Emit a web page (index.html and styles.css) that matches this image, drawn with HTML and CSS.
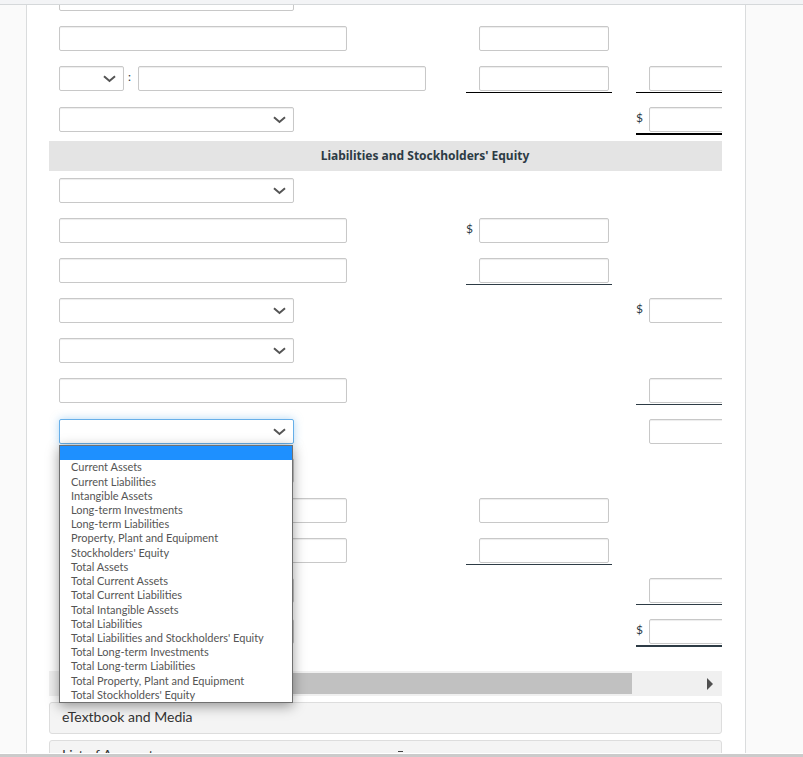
FILE: index.html
```
<!DOCTYPE html>
<html lang="en">
<head>
  <title>Balance Sheet</title>
  <meta charset="utf-8"/>
  <link rel="stylesheet" href="styles.css">
</head>
<body>
  <div class="topbar"></div>

  <main class="viewport">
    <div class="panel">
      <div class="sheet-scroll">
        <table class="sheet">
          <colgroup>
            <col class="col-account">
            <col class="col-amount">
            <col class="col-total">
          </colgroup>
          <tbody>
            <tr>
              <td><select class="field account" aria-label="Section"></select></td>
              <td></td>
              <td></td>
            </tr>
            <tr>
              <td><input type="text" class="field name" aria-label="Account"></td>
              <td><div class="amount"><input type="text" class="field" aria-label="Amount"></div></td>
              <td></td>
            </tr>
            <tr>
              <td>
                <div class="adjust">
                  <select class="field short" aria-label="Add or less"></select>
                  <span class="colon">:</span>
                  <input type="text" class="field name" aria-label="Account">
                </div>
              </td>
              <td><div class="amount line black"><input type="text" class="field" aria-label="Amount"></div></td>
              <td><div class="amount line black"><input type="text" class="field" aria-label="Total"></div></td>
            </tr>
            <tr class="grand">
              <td><select class="field account" aria-label="Total"></select></td>
              <td></td>
              <td><div class="amount double black"><span class="sign">$</span><input type="text" class="field" aria-label="Total assets"></div></td>
            </tr>
            <tr>
              <th colspan="3">Liabilities and Stockholders' Equity</th>
            </tr>
            <tr>
              <td><select class="field account" aria-label="Section"></select></td>
              <td></td>
              <td></td>
            </tr>
            <tr>
              <td><input type="text" class="field name" aria-label="Account"></td>
              <td><div class="amount"><span class="sign">$</span><input type="text" class="field" aria-label="Amount"></div></td>
              <td></td>
            </tr>
            <tr>
              <td><input type="text" class="field name" aria-label="Account"></td>
              <td><div class="amount line"><input type="text" class="field" aria-label="Amount"></div></td>
              <td></td>
            </tr>
            <tr>
              <td><select class="field account" aria-label="Subtotal"></select></td>
              <td></td>
              <td><div class="amount"><span class="sign">$</span><input type="text" class="field" aria-label="Total"></div></td>
            </tr>
            <tr>
              <td><select class="field account" aria-label="Section"></select></td>
              <td></td>
              <td></td>
            </tr>
            <tr>
              <td><input type="text" class="field name" aria-label="Account"></td>
              <td></td>
              <td><div class="amount line"><input type="text" class="field" aria-label="Total"></div></td>
            </tr>
            <tr class="active">
              <td>
                <select class="field account open" aria-label="Subtotal"></select>
                <ul class="options" role="listbox" aria-label="Subtotal options">
                  <li class="selected" role="option" aria-selected="true"></li>
                  <li role="option">Current Assets</li>
                  <li role="option">Current Liabilities</li>
                  <li role="option">Intangible Assets</li>
                  <li role="option">Long-term Investments</li>
                  <li role="option">Long-term Liabilities</li>
                  <li role="option">Property, Plant and Equipment</li>
                  <li role="option">Stockholders' Equity</li>
                  <li role="option">Total Assets</li>
                  <li role="option">Total Current Assets</li>
                  <li role="option">Total Current Liabilities</li>
                  <li role="option">Total Intangible Assets</li>
                  <li role="option">Total Liabilities</li>
                  <li role="option">Total Liabilities and Stockholders' Equity</li>
                  <li role="option">Total Long-term Investments</li>
                  <li role="option">Total Long-term Liabilities</li>
                  <li role="option">Total Property, Plant and Equipment</li>
                  <li role="option">Total Stockholders' Equity</li>
                </ul>
              </td>
              <td></td>
              <td><div class="amount"><input type="text" class="field" aria-label="Total"></div></td>
            </tr>
            <tr>
              <td><select class="field account" aria-label="Section"></select></td>
              <td></td>
              <td></td>
            </tr>
            <tr>
              <td><input type="text" class="field name" aria-label="Account"></td>
              <td><div class="amount"><input type="text" class="field" aria-label="Amount"></div></td>
              <td></td>
            </tr>
            <tr>
              <td><input type="text" class="field name" aria-label="Account"></td>
              <td><div class="amount line"><input type="text" class="field" aria-label="Amount"></div></td>
              <td></td>
            </tr>
            <tr>
              <td><select class="field account" aria-label="Subtotal"></select></td>
              <td></td>
              <td><div class="amount line"><input type="text" class="field" aria-label="Total"></div></td>
            </tr>
            <tr class="grand">
              <td><select class="field account" aria-label="Total"></select></td>
              <td></td>
              <td><div class="amount double"><span class="sign">$</span><input type="text" class="field" aria-label="Total liabilities and equity"></div></td>
            </tr>
          </tbody>
        </table>
      </div>

      <div class="scrollbar">
        <button type="button" class="arrow" aria-label="Scroll left">
          <svg width="6" height="12" viewBox="0 0 6 12"><path d="M6 0v12L0 6z"/></svg>
        </button>
        <div class="track"><div class="thumb"></div></div>
        <button type="button" class="arrow" aria-label="Scroll right">
          <svg width="6" height="12" viewBox="0 0 6 12"><path d="M0 0v12l6-6z"/></svg>
        </button>
      </div>

      <button type="button" class="resource">eTextbook and Media</button>
      <button type="button" class="resource">
        List of Accounts
        <svg width="5" height="8" viewBox="0 0 5 8"><path d="M0 0h5v1H0z"/></svg>
      </button>
    </div>
  </main>

  <div class="bottombar"></div>
</body>
</html>
```
FILE: styles.css
```
* {
  box-sizing: border-box;
}

body {
  display: flex;
  flex-direction: column;
  height: 100vh;
  margin: 0;
  overflow: hidden;
  background: #fafafa;
  color: #2d3b45;
  font-family: Lato, sans-serif;
  font-size: 12px;
}

.topbar {
  flex: none;
  height: 5px;
  background: #f3f4f6;
  border-bottom: 1px solid #d5d8da;
}

.bottombar {
  flex: none;
  height: 4px;
  background: #cbcbcb;
  border-top: 1px solid #fff;
}

.viewport {
  flex: 1;
  min-height: 0;
  overflow: hidden;
}

.panel {
  position: relative;
  margin: 0 57px 0 26px;
  padding: 0 23px 20px 22px;
  background: #fff;
  border: solid #dadcdd;
  border-width: 0 1px;
}

/* answer table */
.sheet-scroll {
  overflow: hidden;
}

.sheet {
  width: 752px;
  /* the page is scrolled part way into the first row */
  margin-top: -26px;
  table-layout: fixed;
  border-collapse: collapse;
}

.col-account {
  width: 417px;
}

.col-amount {
  width: 170px;
}

.sheet td {
  height: 40px;
  padding: 7px 0 6px;
  vertical-align: top;
}

.sheet td:first-child {
  padding-left: 10px;
}

.sheet .grand td {
  height: 42px;
  padding-top: 8px;
}

.sheet .active td {
  padding-top: 8px;
  padding-bottom: 5px;
}

.sheet th {
  height: 30px;
  padding: 0 0 2px;
  background: #e4e4e4;
  font-family: "Noto Sans", sans-serif;
  font-size: 12px;
  font-weight: 700;
  text-align: center;
}

.field {
  display: block;
  width: 130px;
  height: 25px;
  margin: 0;
  padding: 2px 6px;
  background-color: #fff;
  border: 1px solid #c8c8c8;
  border-radius: 2px;
  box-shadow: inset 0 1px 1px rgba(0, 0, 0, 0.075);
  font: inherit;
}

.field.name {
  width: 288px;
}

select.field {
  width: 235px;
  appearance: none;
  background-image: url("data:image/svg+xml,%3Csvg xmlns='http://www.w3.org/2000/svg' width='13' height='8' viewBox='0 0 13 8'%3E%3Cpath d='M1 1.2l5.5 4.8L12 1.2' fill='none' stroke='%23555' stroke-width='2'/%3E%3C/svg%3E");
  background-repeat: no-repeat;
  background-position: right 7px center;
}

select.short {
  width: 65px;
}

select.open {
  border-color: #66afe9;
  box-shadow: 0 0 8px rgba(102, 175, 233, 0.5);
}

.adjust {
  display: flex;
}

.colon {
  width: 14px;
  padding-left: 4px;
  line-height: 22px;
}

.amount {
  display: flex;
  justify-content: flex-end;
  width: 146px;
  padding: 0 3px 1px 0;
  border-bottom: 1px solid transparent;
}

.amount.line {
  border-bottom-color: #2d3b45;
}

.amount.double {
  border-bottom: 2px solid #2d3b45;
}

.amount.black {
  border-bottom-color: #000;
}

.sign {
  width: 13px;
  line-height: 22px;
}

/* open list, lies over the rows below it */
.options {
  position: absolute;
  z-index: 1;
  display: grid;
  grid-auto-rows: 1fr;
  align-items: center;
  width: 234px;
  height: 258px;
  margin: 1px 0 0;
  padding: 0;
  background: #fff;
  border: 1px solid #707070;
  box-shadow: 0 3px 12px rgba(0, 0, 0, 0.4);
  color: #555;
  font-size: 11px;
  line-height: 14px;
  list-style: none;
}

.options li {
  padding-left: 11px;
}

.options .selected {
  align-self: stretch;
  background: #1e90ff;
}

/* horizontal scrollbar */
.scrollbar {
  display: flex;
  align-items: center;
  height: 25px;
  margin-top: 18px;
  background: #f0f0f0;
}

.arrow {
  display: flex;
  align-items: center;
  justify-content: center;
  width: 25px;
  height: 25px;
  padding: 0;
  background: none;
  border: 0;
}

.arrow path {
  fill: #505050;
}

.track {
  flex: 1;
}

.thumb {
  width: 89.5%;
  height: 21px;
  background: #c1c1c1;
}

.resource {
  display: grid;
  grid-template-columns: 1fr 1fr;
  column-gap: 24px;
  align-items: center;
  width: 100%;
  height: 32px;
  margin-top: 6px;
  padding: 0 12px 2px;
  background: #f4f4f4;
  border: 1px solid #ddd;
  border-radius: 3px;
  color: #333;
  font-family: inherit;
  font-size: 14px;
  line-height: 18px;
  text-align: left;
}

.resource path {
  fill: #444;
}
```
